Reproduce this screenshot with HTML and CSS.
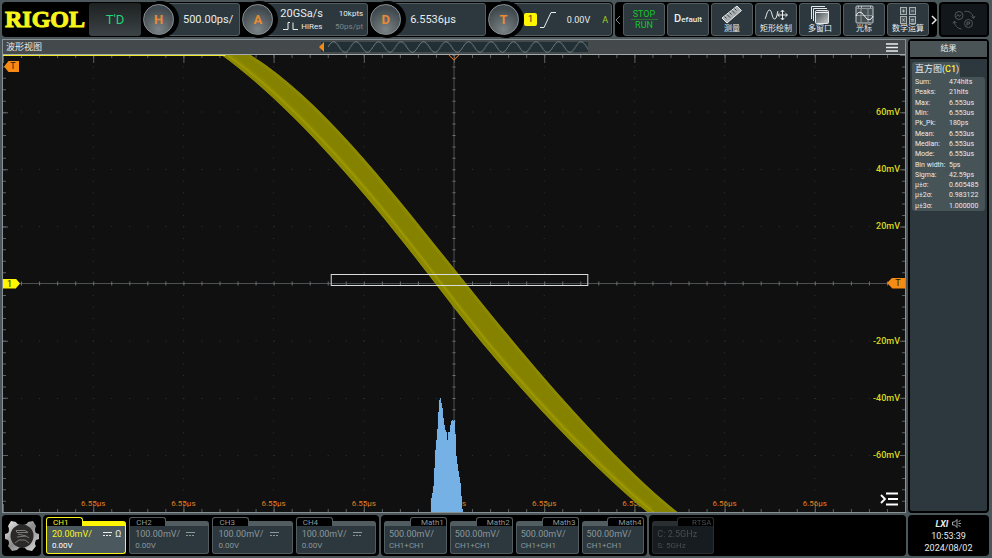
FILE: index.html
```html
<!DOCTYPE html>
<html lang="zh-CN">
<head>
  <meta charset="UTF-8">
  <meta name="viewport" content="width=device-width, initial-scale=1.0">
  <title>RIGOL</title>
  <link rel="stylesheet" href="styles.css">
</head>
<body>
<div class="scope">
  <header class="topbar">
    <div class="panel status">
      <div class="logo">RIGOL</div>
      <div class="trig-state">T'D</div>
      <div class="knob-group knob-h">
        <button class="knob">H</button>
        <div class="readout">500.00ps/</div>
      </div>
      <div class="knob-group knob-a">
        <button class="knob">A</button>
        <div class="readout acquire">
          <span class="rate">20GSa/s</span>
          <span class="small">10kpts</span>
          <span class="mode"><svg width="16" height="8" viewBox="0 0 16 8"><path d="M0 7.500H5V.500H7M10 .500V7.500H15" fill="none" stroke="#e8ecec"/></svg>HiRes</span>
          <span class="small dim">50ps/pt</span>
        </div>
      </div>
      <div class="knob-group knob-d">
        <button class="knob">D</button>
        <div class="readout">6.5536µs</div>
      </div>
      <div class="knob-group knob-t">
        <button class="knob">T</button>
        <div class="readout trigger">
          <span class="source">1</span>
          <svg width="16" height="18" viewBox="0 0 16 18"><path d="M0 16.500H4L11 1.500H16" fill="none" stroke="#e8ecec"/></svg>
          <span class="level">0.00V</span>
          <span class="sweep">A</span>
        </div>
      </div>
    </div>

    <nav class="panel tools">
      <button class="arrow dim" aria-label="prev"><svg width="6" height="10" viewBox="0 0 6 10"><path d="M5 1 1 5l4 4" fill="none" stroke="currentColor"/></svg></button>
      <button class="tool run"><span>STOP</span><span>RUN</span></button>
      <button class="tool default"><span class="big">D</span>efault</button>
      <button class="tool">
        <svg width="22" height="19" viewBox="0 0 22 19"><path d="M1 13 16 1l4.500 4.500L6 18z" fill="#a9afb1" stroke="#eee"/><path d="M3.500 11.500l2 2M6 9.500l3 3M8.500 7.500l2 2M11 5.500l3 3M13.500 3.500l2 2" stroke="#364147"/></svg>
        <span>测量</span>
      </button>
      <button class="tool">
        <svg width="24" height="19" viewBox="0 0 24 19"><path d="M1 14C2 13 3 5 5.500 5S8 14 10.500 14 13 8 14 6M18.500 5.500v9M14 10h9M16.800 7l1.700-2 1.700 2M16.800 13l1.700 2 1.700-2M15.500 8.300 13.500 10l2 1.700M21.500 8.300l2 1.700-2 1.700" fill="none" stroke="#eef1f1"/></svg>
        <span>矩形绘制</span>
      </button>
      <button class="tool">
        <svg width="20" height="19" viewBox="0 0 20 19"><defs><linearGradient id="win" x1="0" y1="0" x2="1" y2="1"><stop offset="0" stop-color="#3c474c"/><stop offset="1" stop-color="#c9cdce"/></linearGradient></defs><path d="M1.500 14V1.500H15M3.500 16V3.500H17" fill="none" stroke="#e4e7e7"/><rect x="5.500" y="5.500" width="13" height="13" rx="1" fill="url(#win)" stroke="#e4e7e7"/><path d="M6 7.500h12" stroke="#f4f4f4"/></svg>
        <span>多窗口</span>
      </button>
      <button class="tool">
        <svg width="19" height="19" viewBox="0 0 19 19"><rect x="1" y="1" width="17" height="17" rx="1" fill="#465157" stroke="#c3c8ca"/><path d="M1 3.500h17M6 3v15M13 3v15M1 10.500h17" stroke="#8d9598"/><path d="M3 2h1M6 2h1M15 2h1" stroke="#fff"/><path d="M1 11c2-5 5-5 8.500 0s6 5 8.500 0" fill="none" stroke="#fff"/></svg>
        <span>光标</span>
      </button>
      <button class="tool">
        <svg width="18" height="18" viewBox="0 0 18 18"><g fill="#465258" stroke="#a9b0b2"><rect x="1.500" y="1.500" width="6" height="7"/><rect x="10.500" y="1.500" width="6" height="7"/><rect x="1.500" y="10.500" width="6" height="7"/><rect x="10.500" y="10.500" width="6" height="7"/></g><path d="M3 5h3M4.500 3.500v3M12 5h3M3.500 12.500l2 3M5.500 12.500l-2 3M12 13.500h3M12 15h3" stroke="#c3c8ca" stroke-width=".8"/></svg>
        <span>数学运算</span>
      </button>
      <button class="arrow" aria-label="next"><svg width="6" height="10" viewBox="0 0 6 10"><path d="M1 1l4 4-4 4" fill="none" stroke="currentColor" stroke-width="1.500"/></svg></button>
    </nav>

    <button class="panel cycle" aria-label="switch">
      <svg width="24" height="22" viewBox="0 0 24 22" fill="none" stroke="#50585b"><circle cx="7" cy="6.500" r="4"/><circle cx="16.500" cy="14.500" r="4"/><path d="M12.500 2.500C17 1.500 20.500 4 21.500 9M19.500 7.500l2 2 1.500-2.500M2.500 12.500c0 4 3 7 7 7.500M1 14.500l1.500-2.500 2 2"/><path d="M4.500 7.500l1.500-2 1.500 2 1.500-2M15 16.500v-3.500h2.500v2H15"/></svg>
    </button>
  </header>

  <main class="view">
    <div class="view-head">
      <h1>波形视图</h1>
      <svg class="memory" viewBox="0 0 270 12" preserveAspectRatio="none">
        <defs><pattern id="sine" x="9" width="22.500" height="12" patternUnits="userSpaceOnUse"><path d="M0 6C4-1 7-1 11.250 6S18.500 13 22.500 6" fill="none" stroke="#7d8f91" stroke-width=".8"/></pattern></defs>
        <path d="M2 1h267v10H2z" fill="#223035"/>
        <path d="M9 0h260v12H9z" fill="url(#sine)"/>
        <path d="M5 1v10L0 6z" fill="#f58a14"/>
      </svg>
      <button class="menu" aria-label="menu"><svg width="12" height="9" viewBox="0 0 12 9"><path d="M0 1h12M0 4.500h12M0 8h12" stroke="#eceeee" stroke-width="1.400"/></svg></button>
    </div>

    <div class="plot">
      <svg class="layer" viewBox="0 0 900 457" preserveAspectRatio="none">
        <g stroke="#303334" stroke-dasharray="1 10.430">
          <path d="M90 0v457M180 0v457M270 0v457M360 0v457M540 0v457M630 0v457M720 0v457M810 0v457"/>
          <path d="M0 57h900M0 114.500h900M0 171.500h900M0 286h900M0 343.500h900M0 400.500h900" stroke-dasharray="1 17"/>
        </g>
        <!-- centre axes -->
        <path d="M0 228.500h900M450 0v457" stroke="#4c5052"/>
        <path d="M0 228.500h900" stroke="#6c7072" stroke-width="4" stroke-dasharray="1 17"/>
        <path d="M450 0v457" stroke="#6c7072" stroke-width="3" stroke-dasharray="1 10.430"/>
        <!-- edge ticks -->
        <g stroke="#5c6163" stroke-width="6">
          <path d="M0 0h900M0 457h900" stroke-dasharray="1 17"/>
          <path d="M0 0v457M900 0v457" stroke-dasharray="1 10.430"/>
          <path d="M0 0h900M0 457h900" stroke-width="16" stroke-dasharray="1 89"/>
          <path d="M0 0v457M900 0v457" stroke-width="10" stroke-dasharray="1 56.130"/>
        </g>
      </svg>

      <div class="time-axis">
        <span>6.55µs</span><span>6.55µs</span><span>6.55µs</span><span>6.55µs</span><span>6.55µs</span><span>6.55µs</span><span>6.55µs</span><span>6.56µs</span><span>6.56µs</span>
      </div>

      <svg class="layer" viewBox="0 0 900 457" preserveAspectRatio="none">
        <defs>
          <filter id="soft"><feGaussianBlur stdDeviation=".7"/></filter>
          <clipPath id="band"><path d="M218 0C282 46 354 128 414 206L451 254C511 332 590 414 644 458H674C606 404 524 306 464 231L444 206C384 131 315 42 247 0z"/></clipPath>
        </defs>
        <path d="M218 0C282 46 354 128 414 206L451 254C511 332 590 414 644 458H674C606 404 524 306 464 231L444 206C384 131 315 42 247 0z" fill="#858200" filter="url(#soft)"/>
        <g clip-path="url(#band)" fill="none" filter="url(#soft)">
          <path d="M218 0C282 46 354 128 414 206L451 254C511 332 590 414 644 458" stroke="#8c8903" stroke-width="14"/>
          <path d="M224 0C288 46 360 128 420 206L457 254C517 332 596 414 650 458" stroke="#9c9806" stroke-width="2"/>
          <path d="M247 0C315 42 384 131 444 206L464 231C524 306 606 404 674 458" stroke="#8c8905" stroke-width="6"/>
        </g>
        <path d="M327.500 219.500H583.500V230.500H327.500z" fill="none" stroke="#d9dcdc"/>
        <path d="M427 457V443h1v-5h1v-7h1v-18h1v-18h1v-10h1v-11h1v-17h1v-12h1v-2h1v5h1v5h1v10h1v7h1v5h1v2h1v8h1v-8h2v-7h1v-4h1v-1h1v1h1v-1h1v14h1v22h1v8h1v7h1v6h1v6h1v13h1v13h1v3z" fill="#76b1e5"/>
        <path d="M0 .500H222" stroke="#eee92b"/>
        <path d="M445 0l5 5 5-5" fill="none" stroke="#d86f2d"/>
      </svg>

      <div class="volt-axis">
        <span>60mV</span><span>40mV</span><span>20mV</span><span></span><span>-20mV</span><span>-40mV</span><span>-60mV</span>
      </div>
      <span class="flag flag-trig">T</span>
      <span class="flag flag-ch">1</span>
      <span class="flag flag-level">T</span>
      <button class="list" aria-label="list"><svg width="20" height="14" viewBox="0 0 20 14"><path d="M1 3l4 4-4 4M6 1.500h12M8 7h10M6 12.500h12" fill="none" stroke="#fff" stroke-width="1.800"/></svg></button>
    </div>
  </main>

  <aside class="results">
    <h2>结果</h2>
    <div class="result">
      <h3>直方图(<b>C1</b>)</h3>
      <table>
        <tr><th>Sum:</th><td>474hits</td></tr>
        <tr><th>Peaks:</th><td>21hits</td></tr>
        <tr><th>Max:</th><td>6.553us</td></tr>
        <tr><th>Min:</th><td>6.553us</td></tr>
        <tr><th>Pk_Pk:</th><td>180ps</td></tr>
        <tr><th>Mean:</th><td>6.553us</td></tr>
        <tr><th>Median:</th><td>6.553us</td></tr>
        <tr><th>Mode:</th><td>6.553us</td></tr>
        <tr><th>Bin width:</th><td>5ps</td></tr>
        <tr><th>Sigma:</th><td>42.59ps</td></tr>
        <tr><th>µ±σ:</th><td>0.605485</td></tr>
        <tr><th>µ±2σ:</th><td>0.983122</td></tr>
        <tr><th>µ±3σ:</th><td>1.000000</td></tr>
      </table>
    </div>
  </aside>

  <footer class="bottombar">
    <button class="panel gear" aria-label="settings">
      <svg width="36" height="36" viewBox="0 0 36 36">
        <defs><linearGradient id="steel" x1="0" y1="0" x2="1" y2="1"><stop offset="0" stop-color="#eee"/><stop offset=".5" stop-color="#8b8b8b"/><stop offset="1" stop-color="#ddd"/></linearGradient></defs>
        <path d="M7 3l5 1q1 3 6 3t6-3l5-1 3 5q-2 4 0 7l3 1v5l-3 1q-2 4 0 6l-4 5-5-1q-2-3-5-3t-5 3l-5 1-4-5q2-3 0-6l-3-1v-5l3-1q2-3 0-7z" fill="url(#steel)"/>
        <circle cx="18" cy="18" r="11.500" fill="#2b2828"/>
        <path d="M12 12.500h9l3 2H13zM13 19l9-1 3 2M11 25l4-3h6l4 3M14 16l8 2" fill="none" stroke="#7d7979"/>
      </svg>
    </button>
    <div class="panel channels">
      <button class="card active"><span class="head"><span class="tab">CH1</span><span class="strip"></span></span><span class="body"><span>20.00mV/</span><span class="coupling"><svg width="9" height="4" viewBox="0 0 9 4"><path d="M0 .500h9" stroke="currentColor"/><path d="M0 3.500h9" stroke="currentColor" stroke-dasharray="2 1"/></svg> Ω</span><span class="offset">0.00V</span></span></button>
      <button class="card"><span class="head"><span class="tab">CH2</span><span class="strip"></span></span><span class="body"><span>100.00mV/</span><span class="coupling"><svg width="9" height="4" viewBox="0 0 9 4"><path d="M0 .500h9" stroke="currentColor"/><path d="M0 3.500h9" stroke="currentColor" stroke-dasharray="2 1"/></svg></span><span class="offset">0.00V</span></span></button>
      <button class="card"><span class="head"><span class="tab">CH3</span><span class="strip"></span></span><span class="body"><span>100.00mV/</span><span class="coupling"><svg width="9" height="4" viewBox="0 0 9 4"><path d="M0 .500h9" stroke="currentColor"/><path d="M0 3.500h9" stroke="currentColor" stroke-dasharray="2 1"/></svg></span><span class="offset">0.00V</span></span></button>
      <button class="card"><span class="head"><span class="tab">CH4</span><span class="strip"></span></span><span class="body"><span>100.00mV/</span><span class="coupling"><svg width="9" height="4" viewBox="0 0 9 4"><path d="M0 .500h9" stroke="currentColor"/><path d="M0 3.500h9" stroke="currentColor" stroke-dasharray="2 1"/></svg></span><span class="offset">0.00V</span></span></button>
    </div>
    <div class="panel maths">
      <button class="card right"><span class="head"><span class="strip"></span><span class="tab">Math1</span></span><span class="body"><span>500.00mV/</span><span class="offset">CH1+CH1</span></span></button>
      <button class="card right"><span class="head"><span class="strip"></span><span class="tab">Math2</span></span><span class="body"><span>500.00mV/</span><span class="offset">CH1+CH1</span></span></button>
      <button class="card right"><span class="head"><span class="strip"></span><span class="tab">Math3</span></span><span class="body"><span>500.00mV/</span><span class="offset">CH1+CH1</span></span></button>
      <button class="card right"><span class="head"><span class="strip"></span><span class="tab">Math4</span></span><span class="body"><span>500.00mV/</span><span class="offset">CH1+CH1</span></span></button>
    </div>
    <div class="panel rtsa">
      <button class="card right off"><span class="head"><span class="strip"></span><span class="tab">RTSA</span></span><span class="body"><span>C: 2.5GHz</span><span class="offset">S: 5GHz</span></span></button>
    </div>
    <div class="panel clock">
      <div class="lxi"><b>LXI</b><svg width="9" height="9" viewBox="0 0 9 9"><path d="M.500 3h2L5 .500v8L2.500 6h-2zM6.500 2.500l2-1M6.500 4.500H9M6.500 6.500l2 1" fill="none" stroke="#c9cccc" stroke-width=".8"/></svg></div>
      <time>10:53:39</time>
      <time>2024/08/02</time>
    </div>
  </footer>
</div>
</body>
</html>
```
FILE: styles.css
```css
:root {
  --frame: #4b575b;
  --panel: #2c383e;
  --edge: #525d61;
  --text: #e8ecec;
  --orange: #f58a14;
  --yellow: #f7f41c;
}

* {
  box-sizing: border-box;
}

body {
  margin: 0;
  background: var(--frame);
  color: var(--text);
  font-family: Roboto, "Noto Sans CJK SC", sans-serif;
  font-size: 9px;
}

button {
  margin: 0;
  padding: 0;
  border: none;
  background: none;
  color: inherit;
  font: inherit;
  cursor: pointer;
}

h1, h2, h3 {
  margin: 0;
  font-weight: normal;
}

svg {
  display: block;
}

.scope {
  display: grid;
  grid-template-columns: 1fr 81px;
  grid-template-rows: 35px 1fr 41px;
  gap: 2px;
  height: 100vh;
  padding: 2px 3px 2px 2px;
}

.panel {
  background: #000;
  border-radius: 4px;
}

/* top bar */
.topbar {
  grid-column: 1 / 3;
  display: flex;
  gap: 2px;
}

.status {
  flex: 1;
  display: flex;
  padding: 1px;
}

.logo {
  width: 86px;
  padding-left: 2px;
  font: bold 24px/33px "Liberation Serif", serif;
  color: var(--yellow);
  -webkit-text-stroke: 1px var(--yellow);
}

.trig-state {
  width: 52px;
  border-radius: 3px;
  background: linear-gradient(#1d2122, #3c4346);
  color: #1fd777;
  font-size: 13px;
  line-height: 34px;
  text-align: center;
}

.knob-group {
  display: flex;
  padding-left: 2px;
}

.knob-h { flex: 99; }
.knob-a { flex: 128; }
.knob-d { flex: 118; }
.knob-t { flex: 126; }

.knob {
  position: relative;
  flex: none;
  width: 31px;
  height: 31px;
  margin-top: 1px;
  border: 1px solid #858c8f;
  border-radius: 50%;
  background: radial-gradient(circle at 50% 85%, #7c8387, #3f484c 75%);
  box-shadow: 2px 0 0 3px #000;
  color: #e98a32;
  font-size: 13px;
  font-weight: bold;
}

.readout {
  flex: 1;
  display: flex;
  align-items: center;
  margin-left: -16px;
  padding-left: 24px;
  border: 1px solid var(--edge);
  border-radius: 3px;
  background: var(--panel);
  font-size: 11px;
}

.acquire {
  display: grid;
  grid-template-columns: 1fr auto;
  align-content: center;
  padding-left: 22px;
  padding-right: 4px;
  line-height: 13px;
}

.mode {
  display: flex;
  align-items: center;
  gap: 2px;
  padding-left: 3px;
  font-size: 8px;
}

.small {
  font-size: 8px;
  text-align: right;
}

.dim {
  color: #7c8588;
}

.trigger {
  padding-left: 20px;
  padding-right: 3px;
  gap: 3px;
}

.source {
  width: 13px;
  border-radius: 2px;
  background: #fff600;
  color: #222;
  font-size: 9px;
  line-height: 13px;
  text-align: center;
}

.level {
  flex: 1;
  font-size: 9px;
  text-align: right;
  padding-right: 9px;
}

.sweep {
  color: #a4cf1c;
  font-size: 9px;
}

.tools {
  display: flex;
  gap: 2px;
  padding: 1px 0;
}

.arrow {
  width: 6px;
}

.tool {
  display: flex;
  flex-direction: column;
  align-items: center;
  justify-content: center;
  width: 42px;
  border: 1px solid var(--edge);
  border-radius: 3px;
  background: var(--panel);
  font-size: 8px;
  line-height: 10px;
  white-space: nowrap;
}

.run {
  color: #18c42b;
  font-size: 9px;
}

.run span + span {
  width: 27px;
  border-top: 1px solid #24772f;
}

.default {
  flex-direction: row;
  align-items: baseline;
  padding-top: 10px;
  justify-content: center;
  font-weight: 500;
}

.big {
  font-size: 11px;
}

.cycle {
  display: grid;
  place-items: center;
  width: 50px;
  border: 2px solid #000;
  background: #11171a;
}

/* waveform view */
.view {
  display: flex;
  flex-direction: column;
  min-height: 0;
  border: 1px solid #899194;
}

.view-head {
  display: grid;
  grid-template-columns: 1fr 270px 1fr;
  align-items: center;
  height: 14px;
  background: #44494b;
}

.view-head h1 {
  padding-left: 3px;
  font-size: 9px;
  line-height: 14px;
}

.memory {
  width: 270px;
  height: 12px;
}

.menu {
  justify-self: end;
  padding-right: 7px;
}

.plot {
  position: relative;
  flex: 1;
  border-top: 1px solid #a4abad;
  background: #101010;
  overflow: hidden;
}

.layer {
  position: absolute;
  inset: 0;
  width: 100%;
  height: 100%;
}

.time-axis {
  position: absolute;
  left: 5%;
  right: 5%;
  bottom: 2px;
  display: flex;
  color: #e07f22;
  font-size: 8px;
  line-height: 12px;
  text-align: center;
}

.time-axis span {
  flex: 1;
}

.volt-axis {
  position: absolute;
  top: 6.25%;
  bottom: 6.25%;
  right: 5px;
  display: grid;
  grid-template-rows: repeat(7, 1fr);
  align-items: center;
  color: #dbd81d;
  font-weight: 500;
  text-align: right;
}

.flag {
  position: absolute;
  width: 15px;
  height: 11px;
  background: var(--orange);
  color: #2a1a05;
  font-size: 9px;
  line-height: 11px;
  text-align: center;
}

.flag-trig {
  top: 6px;
  left: 1px;
  padding-left: 3px;
  clip-path: polygon(30% 0, 100% 0, 100% 100%, 30% 100%, 0 50%);
}

.flag-ch {
  top: calc(50% - 5px);
  left: 0;
  width: 17px;
  height: 10px;
  padding-right: 4px;
  background: #fff600;
  line-height: 10px;
  clip-path: polygon(0 0, 75% 0, 100% 50%, 75% 100%, 0 100%);
}

.flag-level {
  top: calc(50% - 6px);
  right: 0;
  width: 18px;
  padding-left: 4px;
  clip-path: polygon(30% 0, 100% 0, 100% 100%, 30% 100%, 0 50%);
}

.list {
  position: absolute;
  right: 5px;
  bottom: 6px;
}

/* results */
.results {
  border: 2px solid #000;
  border-radius: 4px;
  background: var(--panel);
}

.results h2 {
  border-bottom: 2px solid #000;
  background: #4a5457;
  font-size: 8px;
  line-height: 16px;
  text-align: center;
}

.result {
  padding: 3px 2px;
}

.result h3 {
  width: 48px;
  padding-left: 3px;
  border-radius: 3px 3px 0 0;
  background: #465357;
  font-size: 9px;
  line-height: 15px;
  white-space: nowrap;
}

.result b {
  color: var(--yellow);
  font-weight: 500;
}

.result table {
  width: 100%;
  height: 134px;
  border-spacing: 0;
  border-radius: 0 3px 3px 3px;
  background: #465357;
  font-size: 7px;
  line-height: 8px;
}

.result th,
.result td {
  padding: 0;
  font-weight: normal;
  text-align: left;
  white-space: nowrap;
}

.result th {
  width: 37px;
  padding-left: 3px;
}

/* bottom bar */
.bottombar {
  grid-column: 1 / 3;
  display: flex;
  gap: 2px;
}

.gear {
  display: grid;
  place-items: center;
  width: 39px;
}

.channels,
.maths,
.rtsa {
  display: flex;
  gap: 3px;
  padding: 2px 3px;
}

.channels {
  flex: 337;
}

.maths {
  flex: 266;
}

.rtsa {
  flex: 256;
}

.clock {
  width: 81px;
}

.card {
  flex: 1;
  display: flex;
  flex-direction: column;
  color: #8b979b;
  font-size: 9px;
  text-align: left;
  white-space: nowrap;
}

.head {
  display: flex;
  align-items: flex-end;
  width: 100%;
  height: 9px;
}

.tab {
  width: 37px;
  height: 9px;
  padding-left: 6px;
  border: 1px solid var(--edge);
  border-bottom: none;
  border-radius: 3px 3px 0 0;
  background: #000;
  font-size: 8px;
  line-height: 9px;
}

.strip {
  flex: 1;
  height: 5px;
  border-radius: 0 3px 0 0;
  background: var(--edge);
}

.body {
  flex: 1;
  display: grid;
  grid-template-columns: 1fr auto;
  align-content: center;
  width: 100%;
  padding: 0 4px 0 5px;
  border: 1px solid var(--edge);
  border-top: none;
  border-radius: 0 0 3px 3px;
  background: var(--panel);
  line-height: 12px;
}

.coupling {
  display: flex;
  align-items: center;
  gap: 3px;
  padding-right: 9px;
}

.offset {
  grid-column: 1 / 3;
  font-size: 8px;
}

.right .tab {
  padding: 0 2px 0 0;
  text-align: right;
}

.right .strip {
  border-radius: 3px 0 0 0;
}

.right .body {
  padding-left: 4px;
}

.active {
  color: var(--yellow);
}

.active .tab,
.active .body {
  border-color: var(--yellow);
}

.active .strip {
  background: #fff600;
}

.active .body {
  background: #4b585d;
}

.active .coupling {
  padding-right: 0;
  color: var(--text);
}

.active .offset {
  color: #fff;
}

.off {
  flex: none;
  width: 62px;
  opacity: .5;
}

.clock {
  display: flex;
  flex-direction: column;
  align-items: center;
  justify-content: center;
  line-height: 12px;
}

.lxi {
  display: flex;
  align-items: center;
  gap: 4px;
}

.lxi b {
  font-style: italic;
}
```
